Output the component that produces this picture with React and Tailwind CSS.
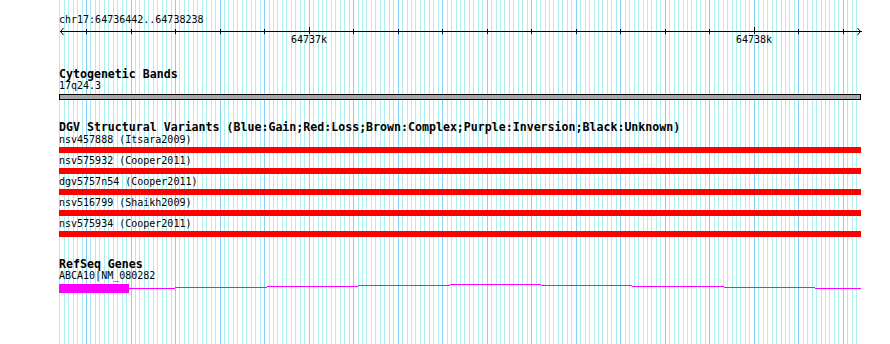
const px = bp => Math.floor(86.5 + 0.4452 * (bp - 64736500))

const gridLines = []
for (let bp = 64736440; bp <= 64738230; bp += 10) {
  gridLines.push({ x: px(bp), major: bp % 100 === 0 })
}

const ticks = []
for (let bp = 64736500; bp <= 64738200; bp += 100) {
  ticks.push({ x: px(bp), major: bp % 1000 === 0, bp })
}

const variants = [
  'nsv457888 (Itsara2009)',
  'nsv575932 (Cooper2011)',
  'dgv5757n54 (Cooper2011)',
  'nsv516799 (Shaikh2009)',
  'nsv575934 (Cooper2011)',
]

// intron hat, x offsets relative to track start (59)
const intron = [
  [70, 116, 4],
  [116, 208, 3],
  [208, 299, 2],
  [299, 391, 1],
  [391, 482, 0],
  [482, 573, 1],
  [573, 665, 2],
  [665, 756, 3],
  [756, 802, 4],
]

function Grid() {
  return (
    <svg className="absolute inset-0" width="890" height="344" shapeRendering="crispEdges">
      {gridLines.map(l => (
        <rect key={l.x} x={l.x} y="0" width="1" height="344" fill={l.major ? '#87cefa' : '#afeeee'} />
      ))}
    </svg>
  )
}

function Ruler() {
  return (
    <div className="relative h-[46px]">
      <div className="pl-[59px] pt-[14px] text-[10px] leading-[12px]">chr17:64736442..64738238</div>
      <svg className="absolute left-0 top-0" width="890" height="46" shapeRendering="crispEdges">
        <rect x="60" y="31" width="802" height="1" fill="#000" />
        {ticks.map(t => (
          <rect key={t.bp} x={t.x} y={t.major ? 27 : 29} width="1" height={t.major ? 7 : 5} fill="#000" />
        ))}
        <path d="M63.5 28 L60.5 31.5 L63.5 35" stroke="#000" fill="none" shapeRendering="auto" />
        <path d="M857.5 28 L860.5 31.5 L857.5 35" stroke="#000" fill="none" shapeRendering="auto" />
      </svg>
      {ticks.filter(t => t.major).map(t => (
        <span
          key={t.bp}
          className="absolute top-[34px] w-[36px] -translate-x-1/2 text-center text-[10px] leading-[12px]"
          style={{ left: t.x }}
        >
          {t.bp / 1000}k
        </span>
      ))}
    </div>
  )
}

function Title({ children }) {
  return <div className="text-[11.6px] leading-[11px] font-bold whitespace-pre">{children}</div>
}

function Label({ children, className = '' }) {
  return <div className={`text-[10px] leading-[12px] whitespace-pre ${className}`}>{children}</div>
}

export default function App() {
  return (
    <div className="relative w-[890px] h-[344px] overflow-hidden bg-white text-black font-['DejaVu_Sans_Mono','Liberation_Mono',monospace]">
      <Grid />
      <div className="relative">
        <Ruler />

        <section className="mt-[23px] pl-[59px]">
          <Title>Cytogenetic Bands</Title>
          <Label>17q24.3</Label>
          <div className="mt-[2px] h-[6px] w-[802px] border border-black bg-[#a9a9a9]" />
        </section>

        <section className="mt-[22px] pl-[59px]">
          <Title>DGV Structural Variants (Blue:Gain;Red:Loss;Brown:Complex;Purple:Inversion;Black:Unknown)</Title>
          {variants.map((v, i) => (
            <div key={v}>
              <Label className={i === 0 ? 'mt-[1px]' : 'mt-[2px]'}>{v}</Label>
              <div className="mt-[1px] h-[6px] w-[802px] bg-[#ff0000]" />
            </div>
          ))}
        </section>

        <section className="mt-[22px] pl-[59px]">
          <Title>RefSeq Genes</Title>
          <Label>ABCA10|NM_080282</Label>
          <svg className="mt-[2px] block" width="802" height="9" shapeRendering="crispEdges">
            <rect x="0" y="0" width="70" height="9" fill="#ff00ff" />
            {intron.map(([a, b, y]) => (
              <rect key={a} x={a} y={y} width={b - a} height="1" fill="#ff00ff" />
            ))}
          </svg>
        </section>
      </div>
    </div>
  )
}
